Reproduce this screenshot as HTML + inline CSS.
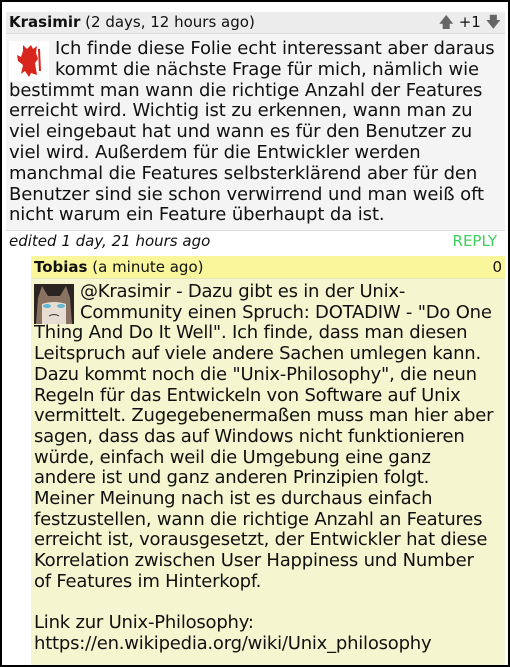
<!DOCTYPE html>
<html><head><meta charset="utf-8"><style>
html,body{margin:0;padding:0;overflow:hidden;}
#w{width:506px;height:663px;border:2px solid #000;overflow:hidden;font-family:"DejaVu Sans","Liberation Sans",sans-serif;color:#111;background:#fff;position:relative;}
.c1{position:absolute;left:4px;top:10px;width:499px;}
.hd{height:21px;background:#ececec;font-size:15px;line-height:21px;padding-left:3px;border-bottom:1px solid #ddd;position:relative;}
.bd{background:#f4f4f4;font-size:18px;line-height:20.8px;padding:5px 3px 0 3px;border-bottom:1px solid #ddd;height:191px;letter-spacing:-0.1px;}
.av{float:left;width:40px;height:40px;margin:0 6px 0 0;position:relative;top:2px;background:#fff;}
.ft{height:20px;font-size:15px;font-style:italic;line-height:20px;padding-left:3px;position:relative;}
.ft span{position:absolute;right:8px;top:0;font-style:normal;color:#3ecf5c;}
.c2{position:absolute;left:29px;top:254px;width:474px;}
.hd2{height:22px;background:#faf69c;font-size:15px;line-height:22px;padding-left:3px;position:relative;border-bottom:1px solid #e6e6c0;}
.bd2{background:#f5f6cf;font-size:18px;line-height:20.7px;padding:3px 0 0 3px;height:390px;letter-spacing:-0.22px;white-space:nowrap;}
.av2{float:left;width:40px;height:40px;margin:0 6px 0 0;position:relative;top:2px;background:#3a2e28;}
</style></head><body><div id="w">
<div class="c1">
<div class="hd"><b>Krasimir</b> (2 days, 12 hours ago)
<span style="position:absolute;right:4px;top:0;color:#111">
<span style="color:#666">&#129093;</span> +1 <span style="color:#666">&#129095;</span></span></div>
<div class="bd"><div class="av"><svg width="40" height="40"><path d="M14 4 L18 8 L22 4 L24 8 L28 5 L27 12 L29 18 L26 22 L28 34 L22 32 L20 36 L16 30 L12 33 L14 24 L9 20 L8 14 L12 16 L14 10Z" fill="#d8261c"/><path d="M30 8 L31 30" stroke="#d8261c" stroke-width="2"/></svg></div>Ich finde diese Folie echt interessant aber daraus kommt die nächste Frage für mich, nämlich wie bestimmt man wann die richtige Anzahl der Features erreicht wird. Wichtig ist zu erkennen, wann man zu viel eingebaut hat und wann es für den Benutzer zu viel wird. Außerdem für die Entwickler werden manchmal die Features selbsterklärend aber für den Benutzer sind sie schon verwirrend und man weiß oft nicht warum ein Feature überhaupt da ist.</div>
<div class="ft">edited 1 day, 21 hours ago<span>REPLY</span></div>
</div>
<div class="c2">
<div class="hd2"><b>Tobias</b> (a minute ago)<span style="position:absolute;right:3px;top:0">0</span></div>
<div class="bd2"><div class="av2"><svg width="40" height="40"><rect width="40" height="40" fill="#2b2420"/><path d="M4 14 L8 2 L14 12 L26 12 L32 2 L36 14 L38 40 L2 40Z" fill="#8a7262"/><path d="M8 20 Q20 16 32 20 L32 40 L8 40Z" fill="#e8ddd2"/><ellipse cx="13" cy="22" rx="4" ry="2" fill="#5fb7d4"/><ellipse cx="27" cy="22" rx="4" ry="2" fill="#5fb7d4"/><path d="M15 32 Q20 29 25 32" stroke="#333" fill="none"/></svg></div>@Krasimir - Dazu gibt es in der Unix-<br>Community einen Spruch: DOTADIW - "Do One<br>Thing And Do It Well". Ich finde, dass man diesen<br>Leitspruch auf viele andere Sachen umlegen kann.<br>Dazu kommt noch die "Unix-Philosophy", die neun<br>Regeln für das Entwickeln von Software auf Unix<br>vermittelt. Zugegebenermaßen muss man hier aber<br>sagen, dass das auf Windows nicht funktionieren<br>würde, einfach weil die Umgebung eine ganz<br>andere ist und ganz anderen Prinzipien folgt.<br>Meiner Meinung nach ist es durchaus einfach<br>festzustellen, wann die richtige Anzahl an Features<br>erreicht ist, vorausgesetzt, der Entwickler hat diese<br>Korrelation zwischen User Happiness und Number<br>of Features im Hinterkopf.<br><br>Link zur Unix-Philosophy:<br>https://en.wikipedia.org/wiki/Unix_philosophy</div>
</div>
</div></body></html>
